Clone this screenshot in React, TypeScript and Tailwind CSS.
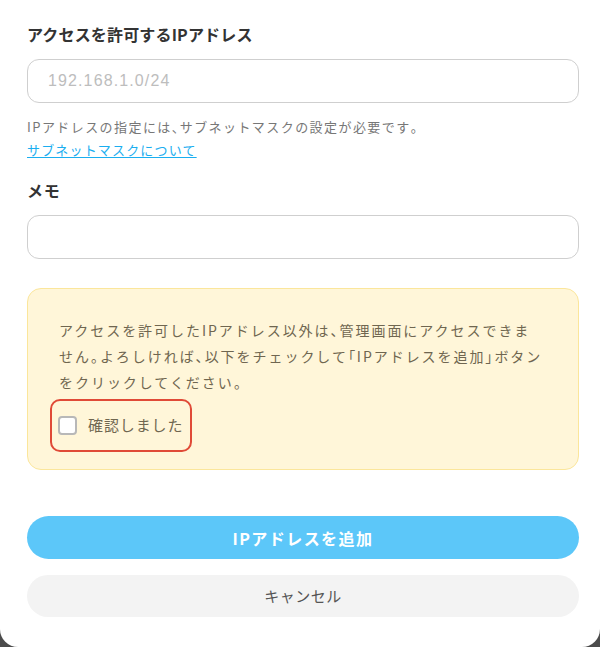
import React from "react";

const PUNCT = /([、。「」])/;

function JP({ text }: { text: string }) {
  const parts = text.split(PUNCT);
  return (
    <>
      {parts.map((p, i) =>
        PUNCT.test(p) ? (
          <span key={i} className="[font-feature-settings:'palt']">
            {p}
          </span>
        ) : (
          <React.Fragment key={i}>{p}</React.Fragment>
        )
      )}
    </>
  );
}

export default function App() {
  return (
    <div
      className="w-[600px] h-[647px] bg-[#4b4b4b] overflow-hidden"
      style={{ fontFamily: '"Noto Sans CJK JP", "Noto Sans", sans-serif' }}
    >
      <div className="h-[647px] bg-white rounded-b-[18px] pl-[27px] pr-[21px] pt-[23px] flex flex-col">
        <label className="block h-[22px] leading-[22px] text-[16px] font-bold text-[#333] tracking-[0.01em]">
          アクセスを許可するIPアドレス
        </label>
        <div className="mt-[14px] h-[44px] rounded-[12px] border border-[#cfcfcf] flex items-center px-[20px]">
          <span
            className="text-[16px] text-[#bdbdbd] tracking-[0.07em]"
            style={{ fontFamily: '"Liberation Sans", Arial, sans-serif' }}
          >
            192.168.1.0/24
          </span>
        </div>
        <p className="mt-[12px] text-[13px] leading-[23px] text-[#777] tracking-[0.11em]">
          <JP text="IPアドレスの指定には、サブネットマスクの設定が必要です。" />
          <br />
          <a className="text-[#1aaef0] underline underline-offset-2 tracking-[0.09em]">サブネットマスクについて</a>
        </p>
        <label className="mt-[18px] block h-[22px] leading-[22px] text-[16px] font-bold text-[#333] tracking-[0.04em]">
          メモ
        </label>
        <div className="mt-[14px] h-[44px] rounded-[12px] border border-[#cfcfcf]" />
        <div className="mt-[29px] h-[182px] rounded-[14px] border border-[#fbe69b] bg-[#fff6d9] pl-[31px] pr-[33px] pt-[28px]">
          <p className="text-[14px] leading-[26px] text-[#6f6650] tracking-[0.14em]">
            <JP text="アクセスを許可したIPアドレス以外は、管理画面にアクセスできません。よろしければ、以下をチェックして「IPアドレスを追加」ボタンをクリックしてください。" />
          </p>
          <div className="mt-[4px] -ml-[9px] inline-flex items-center h-[53px] w-[142px] border-2 border-[#e04a37] rounded-[10px] pl-[6px]">
            <span className="w-[19px] h-[19px] rounded-[4px] border-2 border-[#b8b8b8] bg-white" />
            <span className="ml-[11px] text-[15px] text-[#6f6650] tracking-[0.06em]">確認しました</span>
          </div>
        </div>
        <button className="mt-[46px] h-[43px] rounded-full bg-[#5cc7f9] text-white text-[16px] font-bold tracking-[0.09em]">
          IPアドレスを追加
        </button>
        <button className="mt-[16px] h-[42px] rounded-full bg-[#f3f3f3] text-[#555] text-[15px] tracking-[0.03em]">
          キャンセル
        </button>
      </div>
    </div>
  );
}
